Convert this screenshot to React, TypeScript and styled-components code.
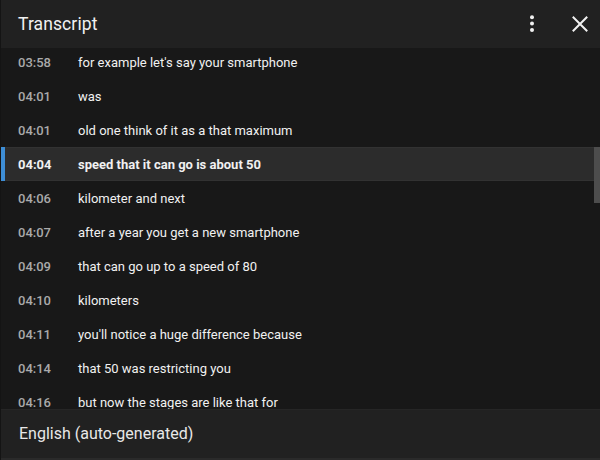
import React from "react";
import styled, { createGlobalStyle } from "styled-components";

const Global = createGlobalStyle`
  html, body { margin: 0; padding: 0; background: #181818; }
  body { font-family: Roboto, "Liberation Sans", Arial, sans-serif; }
  * { box-sizing: border-box; }
`;

const Panel = styled.div`
  width: 600px;
  height: 460px;
  display: flex;
  flex-direction: column;
  background: #181818;
  border-left: 1px solid #141414;
  overflow: hidden;
`;

const Header = styled.div`
  height: 48px;
  flex: 0 0 48px;
  display: flex;
  align-items: center;
  padding: 0 2px 0 17px;
  background: #212121;
`;

const Title = styled.div`
  flex: 1;
  color: #f1f1f1;
  font-size: 17.5px;
  font-weight: 400;
  letter-spacing: 0.1px;
`;

const IconButton = styled.button<{ $gap?: number }>`
  width: 36px;
  height: 36px;
  display: flex;
  align-items: center;
  justify-content: center;
  background: transparent;
  border: none;
  padding: 0;
  color: #f1f1f1;
  margin-left: ${(p) => p.$gap ?? 0}px;
`;

const Body = styled.div`
  flex: 1;
  display: flex;
  overflow: hidden;
`;

const List = styled.div`
  flex: 1;
  overflow: hidden;
`;

const ListInner = styled.div`
  margin-top: -3px;
  display: flex;
  flex-direction: column;
`;

const Row = styled.div<{ $active?: boolean }>`
  position: relative;
  height: 34px;
  flex: 0 0 34px;
  display: flex;
  align-items: center;
  padding-left: 17px;
  background: ${(p) => (p.$active ? "#2c2c2c" : "transparent")};
  box-shadow: ${(p) =>
    p.$active ? "inset 0 1px 0 #323232, inset 0 -1px 0 #323232" : "none"};
  &::before {
    content: "";
    display: ${(p) => (p.$active ? "block" : "none")};
    position: absolute;
    left: 0;
    top: 0;
    bottom: 0;
    width: 4px;
    background: #3e8ed6;
  }
`;

const Time = styled.div<{ $active?: boolean }>`
  width: 60px;
  flex: 0 0 60px;
  font-size: 13px;
  color: ${(p) => (p.$active ? "#f1f1f1" : "#aaaaaa")};
  font-weight: ${(p) => (p.$active ? 700 : 500)};
`;

const Text = styled.div<{ $active?: boolean }>`
  font-size: 13px;
  color: #f1f1f1;
  font-weight: ${(p) => (p.$active ? 700 : 400)};
  white-space: nowrap;
`;

const Track = styled.div`
  width: 6px;
  flex: 0 0 6px;
  display: flex;
  flex-direction: column;
  padding-top: 99px;
`;

const Thumb = styled.div`
  height: 56px;
  background: #4d4d4d;
`;

const Footer = styled.div`
  height: 51px;
  flex: 0 0 51px;
  display: flex;
  align-items: center;
  padding-left: 18px;
  background: #212121;
  border-top: 1px solid #262626;
  border-bottom: 2px solid #2a2a2a;
  color: #e8e8e8;
  font-size: 16px;
  line-height: 20px;
`;

const rows: [string, string][] = [
  ["03:58", "for example let's say your smartphone"],
  ["04:01", "was"],
  ["04:01", "old one think of it as a that maximum"],
  ["04:04", "speed that it can go is about 50"],
  ["04:06", "kilometer and next"],
  ["04:07", "after a year you get a new smartphone"],
  ["04:09", "that can go up to a speed of 80"],
  ["04:10", "kilometers"],
  ["04:11", "you'll notice a huge difference because"],
  ["04:14", "that 50 was restricting you"],
  ["04:16", "but now the stages are like that for"],
];

export default function App() {
  return (
    <>
      <Global />
      <Panel>
        <Header>
          <Title>Transcript</Title>
          <IconButton aria-label="More">
            <svg width="4" height="18" viewBox="0 0 4 18">
              <circle cx="2" cy="2.3" r="2" fill="#f1f1f1" />
              <circle cx="2" cy="8.6" r="2" fill="#f1f1f1" />
              <circle cx="2" cy="14.9" r="2" fill="#f1f1f1" />
            </svg>
          </IconButton>
          <IconButton aria-label="Close" $gap={12}>
            <svg width="16" height="16" viewBox="0 0 16 16">
              <path
                d="M1.5 1.5 L14.5 14.5 M14.5 1.5 L1.5 14.5"
                stroke="#f1f1f1"
                strokeWidth="2"
                strokeLinecap="square"
              />
            </svg>
          </IconButton>
        </Header>
        <Body>
          <List>
            <ListInner>
              {rows.map(([t, s], i) => (
                <Row key={i} $active={i === 3}>
                  <Time $active={i === 3}>{t}</Time>
                  <Text $active={i === 3}>{s}</Text>
                </Row>
              ))}
            </ListInner>
          </List>
          <Track>
            <Thumb />
          </Track>
        </Body>
        <Footer>English (auto-generated)</Footer>
      </Panel>
    </>
  );
}
